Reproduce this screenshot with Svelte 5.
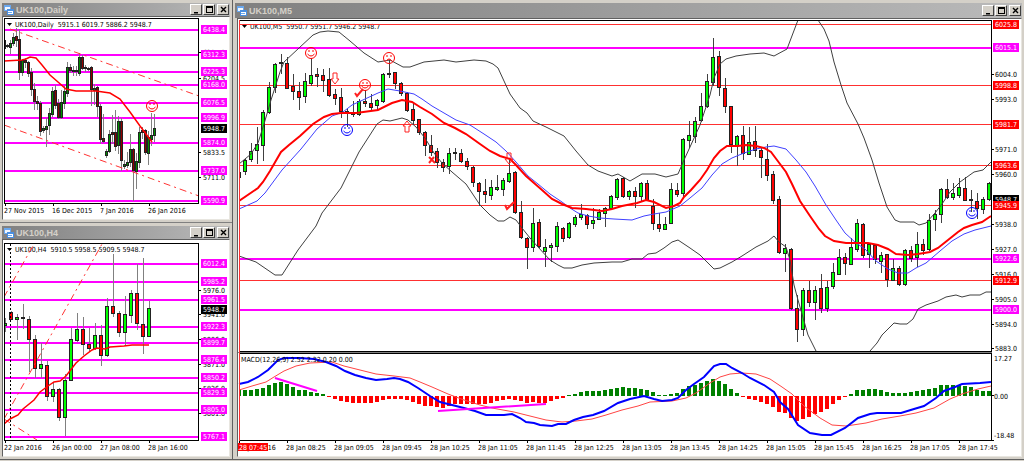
<script lang="ts">
  // each candle: direction, high, body top, body bottom, low
  function parse(list: string, x0: number, step: number) {
    return list.trim().split(/\s+/).map((item, i) => {
      const [high, top, bottom, low] = item.slice(1).split(',').map(Number);
      return { up: item[0] === 'g', x: x0 + i * step, high, top, bottom, low };
    });
  }

  const daily = {
    id: 'daily',
    title: 'UK100,Daily',
    box: '3 17 226 202',
    header: { x: 15, y: 27, text: 'UK100,Daily  5915.1 6019.7 5886.2 5948.7' },
    plot: { x: 4, y: 18, w: 195, h: 185 },
    half: 1,
    candles: parse(`
      r39,40,48,50 r44,45,46,47 g40,43,47,53 g33,37,43,45 r28,36,40,46 r29,39,72,79
      g59,60,72,75 r58,60,62,67 r61,62,73,76 r68,72,89,95 r83,89,101,109 r96,101,103,109
      r101,103,131,135 g126,128,130,132 g118,126,129,146 g108,113,125,134 g87,91,114,116
      r85,90,105,108 r99,103,117,118 g90,102,117,118 g86,91,103,108 g62,67,93,96
      r64,67,70,72 r66,70,71,75 r66,70,71,75 g53,57,73,75 r55,57,68,69 r65,67,68,71
      r67,68,69,70 r66,67,89,105 g84,88,90,104 r86,87,106,116 r104,106,139,143
      r114,138,141,142 g149,151,155,157 g130,134,151,152 r115,132,134,143 r110,132,146,150
      g116,121,145,153 r118,121,160,170 g160,164,166,168 g152,162,165,167 g134,149,162,166
      r148,149,170,200 g153,161,171,188 g127,132,162,167 r127,130,132,138 r129,130,152,154
      g131,137,153,164 g113,135,139,145 g114,128,135,141`, 4, 3),
    lines: [
      { kind: 'trend', pts: '10,29 199,96' },
      { kind: 'trend', pts: '4,125 199,196' },
      { kind: 'average', pts: '4,61 22,60 26,59 30,57 36,58 42,65 50,75 58,82 66,89 76,91 96,91 110,93 120,99 130,112 140,126 152,142' }
    ],
    axisX: 203,
    prices: [[52, '6327.0'], [78, '6204.5'], [152, '5833.5'], [177, '5711.0']],
    levels: [
      [29, '6438.4', 'm'], [54, '6312.3', 'm'], [71, '6225.3', 'm'], [84, '6168.0', 'm'],
      [102, '6076.5', 'm'], [117, '5996.9', 'm'], [142, '5874.0', 'm'], [170, '5737.0', 'm'], [200, '5590.9', 'm']
    ],
    current: [128, '5948.7'],
    timeY: 213,
    times: [[4, '27 Nov 2015'], [52, '16 Dec 2015'], [100, '7 Jan 2016'], [148, '26 Jan 2016']],
    faces: [[152, 106, 'red', 1]]
  };

  const h4 = {
    id: 'h4',
    title: 'UK100,H4',
    box: '3 240 226 216',
    header: { x: 15, y: 252, text: 'UK100,H4  5910.5 5958.5 5909.5 5948.7' },
    plot: { x: 4, y: 243, w: 195, h: 197 },
    half: 2,
    candles: parse(`
      g318,323,325,331 r311,312,319,319 g314,317,319,339 r304,317,318,328 r316,319,339,371
      r335,339,368,377 g343,364,368,377 r361,365,396,400 g382,389,396,401 r388,389,417,420
      g374,380,417,435 g328,339,380,380 g313,329,340,341 r317,329,344,354 r328,344,348,351
      g323,335,348,349 r325,335,355,365 g298,306,355,356 r254,306,313,316 r311,313,332,336
      g296,314,332,345 g290,293,315,322 r264,293,323,329 r258,324,336,353 g301,308,336,336`, 5, 6),
    lines: [
      { kind: 'trend', pts: '4,297 34,244' },
      { kind: 'trend', pts: '4,419 102,244' },
      { kind: 'trend', pts: '4,419 37,440' },
      { kind: 'divider', pts: '10.500,244 10.500,440' },
      { kind: 'average', pts: '4,424 10,419 18,415 23,409 34,400 40,392 48,386 54,382 60,381 66,376 76,363 84,356 92,350 97,348 105,349 110,347 124,346 132,345 149,345' }
    ],
    axisX: 203,
    prices: [[290, '5976.0'], [314, '5941.0'], [339, '5906.0'], [364, '5871.0'], [388, '5836.0'], [413, '5801.0']],
    levels: [
      [263, '6012.4', 'm'], [281, '5985.2', 'm'], [299, '5961.5', 'm'], [326, '5922.3', 'm'], [342, '5899.7', 'm'],
      [359, '5876.4', 'm'], [377, '5850.2', 'm'], [392, '5829.3', 'm'], [409, '5805.0', 'm'], [436, '5767.1', 'm']
    ],
    current: [309, '5948.7'],
    timeY: 450,
    times: [[4, '22 Jan 2016'], [52, '26 Jan 00:00'], [100, '27 Jan 08:00'], [148, '28 Jan 16:00']],
    faces: []
  };

  const m5 = {
    id: 'm5',
    title: 'UK100,M5',
    box: '238 19 783 437',
    header: { x: 250, y: 29, text: 'UK100,M5  5950.7 5951.7 5946.2 5948.7' },
    plot: { x: 239, y: 20, w: 753, h: 331 },
    half: 2,
    candles: parse(`
      g172,172,177,177 g159,160,171,174 g143,151,159,161 g127,144,150,163 g110,112,145,160
      g82,87,112,113 g63,64,87,92 r54,62,63,73 r57,63,88,88 r74,86,91,99 r82,91,97,109
      g73,81,96,102 g58,75,83,85 r68,74,76,86 r69,75,80,91 r68,79,95,96 r89,94,98,104
      r88,97,111,117 r109,111,112,126 r101,113,114,116 g99,101,114,115 r90,101,103,106
      r94,103,107,109 g99,100,105,110 g73,74,101,102 r60,73,74,77 r72,72,83,88 r82,83,93,95
      r92,93,110,111 r103,109,120,124 r119,119,132,134 r131,132,145,155 r135,145,152,155
      r148,151,162,167 r159,162,167,171 g148,153,166,173 r148,152,153,159 r149,153,161,162
      r158,161,166,169 r166,167,182,186 r182,183,191,205 r179,191,194,202 g180,187,195,199
      g175,187,189,190 g178,180,189,195 g160,173,181,182 r171,172,212,213 r201,212,237,238
      r237,238,247,268 g208,223,247,251 r219,222,246,247 g239,247,251,266 g243,245,247,261
      g222,226,246,251 r227,228,238,241 g222,223,237,238 g215,217,224,226 g204,214,217,219
      r214,215,224,228 g208,220,223,228 g209,212,219,219 g207,208,213,226 g195,196,208,209
      g178,179,197,199 r177,178,196,197 g190,191,196,199 r187,191,196,207 g182,183,196,201
      r180,183,200,200 r199,206,223,229 r213,224,228,231 g217,224,229,229 g183,189,223,223
      r183,190,194,196 g138,139,193,197 g121,135,140,147 g117,121,136,142 g93,106,120,121
      g74,81,106,107 g38,57,82,85 r51,56,87,95 r78,88,106,112 r106,106,144,152
      g135,136,145,165 r126,135,153,159 g127,142,154,154 r126,141,150,156 r147,150,157,177
      r144,159,175,180 r171,174,200,203 r196,199,252,253 g244,248,253,271 r248,249,308,309
      r295,308,329,341 g288,290,329,335 r281,290,302,306 g286,290,302,319 r274,288,308,312
      g281,287,308,311 g263,272,286,288 g249,257,274,274 r253,257,263,274 g238,247,264,264
      g219,223,249,251 r223,224,255,257 g243,244,254,267 r244,245,259,263 g252,255,261,272
      r254,254,279,286 g259,268,280,280 r266,268,284,285 g249,250,284,285 r246,250,258,261
      g232,244,257,266 r239,244,250,254 g214,220,249,250 g210,214,219,230 g188,189,214,222
      r179,189,197,198 g183,193,197,199 g178,187,195,197 r177,188,200,200 r190,199,200,211
      r193,201,208,218 g197,199,209,213 g182,183,199,200`, 239, 6),
    lines: [
      { kind: 'band', pts: '239,164 251,154 258,143 264,124 271,100 280,72 284,62 299,48 313,35 320,32 328,31 339,32 350,41 364,53 378,62 390,60 403,67 410,67 424,62 444,60 456,62 474,60 486,61 493,64 498,68 504,81 510,94 520,108 527,113 533,121 546,127 564,136 576,151 588,165 598,171 612,176 618,174 630,181 642,174 655,174 666,177 678,174 684,160 690,147 700,125 710,95 714,78 720,64 726,59 736,56 750,54 764,53 774,56 787,49 798,20' },
      { kind: 'band', pts: '818,20 824,29 829,41 834,62 841,85 847,103 858,124 864,138 872,160 879,183 887,207 895,220 900,222 914,222 919,225 926,223 935,213 942,204 950,192 960,182 974,172 983,170 991,162' },
      { kind: 'band', pts: '239,256 256,262 275,275 282,275 298,250 316,226 322,213 341,188 359,152 377,124 383,120 390,121 402,118 408,120 416,127 425,138 434,153 442,163 452,172 466,184 480,205 490,215 498,221 504,221 510,217 516,220 522,228 530,238 538,247 550,260 558,265 564,268 572,268 582,265 594,263 612,262 622,262 632,259 642,259 648,254 656,253 664,248 672,242 678,240 690,248 700,255 714,269 720,268 732,262 742,256 756,247 768,241 774,236 779,242 786,247 790,260 794,285 798,300 808,335 816,351' },
      { kind: 'band', pts: '870,351 877,343 882,335 894,323 900,324 907,324 913,319 918,309 926,305 938,301 946,297 956,295 962,297 970,295 980,295 986,292 991,292' },
      { kind: 'slow', pts: '239,209 257,201 265,193 282,170 301,149 317,129 332,116 343,112 352,105 365,99 378,93 388,89 400,91 414,94 422,99 432,106 444,113 456,120 470,125 484,134 496,142 506,151 516,162 528,176 538,184 550,194 562,202 570,208 578,213 588,216 600,218 614,219 632,220 644,216 654,214 666,212 680,206 690,198 702,188 712,175 722,164 732,158 744,153 756,149 766,147 774,146 786,149 796,160 806,172 815,186 826,205 836,220 845,233 856,243 865,249 876,261 888,269 898,273 908,273 916,268 926,263 940,251 952,241 964,234 975,230 991,226' },
      { kind: 'average', pts: '239,201 258,188 263,182 270,171 281,152 289,145 300,136 313,124 324,117 332,114 341,113 356,113 378,110 392,103 402,100 412,102 420,107 432,114 444,123 455,128 466,134 480,144 490,151 500,156 510,159 516,165 526,176 534,183 542,190 552,199 562,204 572,208 586,209 602,211 612,209 622,206 637,203 646,200 654,202 666,208 674,206 680,203 684,197 691,190 700,180 707,170 714,158 720,151 727,146 738,146 746,145 756,146 764,148 771,152 777,160 786,172 792,184 800,201 810,216 819,229 825,236 834,241 846,243 868,243 878,245 888,249 896,254 908,255 918,254 930,252 938,248 948,240 958,232 964,228 972,225 982,222 991,216' }
    ],
    axisX: 995,
    prices: [
      [74, '6004.0'], [99, '5993.0'], [149, '5971.0'], [174, '5960.0'], [224, '5938.0'],
      [249, '5927.0'], [274, '5916.0'], [299, '5905.0'], [324, '5894.0'], [348, '5883.0']
    ],
    levels: [
      [24, '6025.8', 'r'], [47, '6015.1', 'm'], [85, '5998.8', 'r'], [124, '5981.7', 'r'], [165, '5963.6', 'r'],
      [205, '5945.9', 'r'], [258, '5922.6', 'm'], [280, '5912.9', 'r'], [309, '5900.0', 'm']
    ],
    current: [199, '5948.7'],
    timeY: 450,
    times: [
      [238, '28 Jan 2016'], [286, '28 Jan 08:25'], [334, '28 Jan 09:05'], [382, '28 Jan 09:45'], [430, '28 Jan 10:25'],
      [478, '28 Jan 11:05'], [526, '28 Jan 11:45'], [574, '28 Jan 12:25'], [622, '28 Jan 13:05'], [670, '28 Jan 13:45'],
      [718, '28 Jan 14:25'], [766, '28 Jan 15:05'], [814, '28 Jan 15:45'], [862, '28 Jan 16:25'], [910, '28 Jan 17:05'],
      [958, '28 Jan 17:45']
    ],
    faces: [[311, 53, 'red', 1], [365, 85, 'red', 1], [389, 58, 'red', -1], [347, 130, 'blue', 1], [972, 213, 'blue', 1]]
  };

  const macdBars = [
    6, 6, 6, 7, 8, 11, 13, 14, 12, 9, 6, 6, 4, 3, 2, -1, -3, -5, -6, -7, -7, -7, -7, -6, -4, -3, -3, -3, -4, -6, -8,
    -10, -10, -11, -12, -10, -8, -8, -8, -8, -8, -8, -7, -5, -4, -3, -4, -5, -7, -6, -7, -7, -5, -3, -2, 1, 2, 4, 5,
    5, 5, 6, 7, 8, 9, 8, 8, 7, 6, 4, 1, 1, 2, 3, 7, 10, 11, 13, 15, 17, 15, 12, 7, 3, -1, -3, -4, -6, -8, -11, -16,
    -17, -22, -25, -23, -21, -18, -16, -13, -8, -4, -1, 2, 6, 6, 7, 7, 6, 4, 3, 3, 3, 4, 5, 6, 7, 8, 11, 11, 11, 11,
    10, 9, 6, 5, 5
  ];
  const macdLine = '239,384 248,382 258,377 268,370 278,360 284,358 300,358 314,359 326,362 336,366 345,371 355,375 366,378 376,380 387,379 394,378 400,379 408,382 418,388 430,396 440,402 452,405 464,408 475,411 486,415 504,415 512,414 520,418 526,422 534,423 540,425 552,426 558,424 566,424 574,420 583,417 593,415 604,411 618,403 630,399 644,396 654,399 662,401 672,400 678,398 686,390 694,384 704,377 714,366 720,364 726,364 732,368 742,373 750,378 764,385 774,392 780,402 788,409 798,425 810,433 822,435 831,435 845,428 858,418 870,414 877,413 901,413 914,409 924,406 936,398 944,391 955,387 962,384 980,383 991,382';
  const signalLine = '239,390 252,386 266,382 274,377 284,371 296,366 310,363 332,362 344,366 360,370 376,374 394,376 410,378 420,382 432,387 448,394 464,400 480,405 492,408 514,412 530,416 546,420 562,422 576,421 592,419 606,415 622,410 638,406 650,402 672,401 686,398 696,393 710,383 720,377 730,374 742,373 756,374 770,379 782,387 792,394 804,406 820,418 832,425 846,426 866,423 882,419 900,416 916,413 934,408 950,399 962,394 978,389 991,386';
</script>

{#snippet titlebar(title)}
  <header class="titlebar">
    <svg class="app-icon" viewBox="0 0 10 10" width="10" height="10" aria-hidden="true">
      <rect x="0" y="0" width="7" height="6" fill="#6aa8ee" />
      <rect x="1" y="2" width="5" height="3" fill="#f0f7ff" />
      <rect x="3" y="4" width="7" height="6" fill="#4b8fe0" />
      <path d="M4 6h5v3H4z" fill="#fff" />
      <path d="M4 8l1-1 1 1 1-1 1 1" fill="none" stroke="#6aa8ee" />
    </svg>
    <h2>{title}</h2>
    <div class="controls">
      <button type="button" aria-label="Minimize">
        <svg viewBox="0 0 9 8" width="9" height="8"><path d="M2 6h4v1.500H2z" /></svg>
      </button>
      <button type="button" aria-label="Maximize">
        <svg viewBox="0 0 9 8" width="9" height="8"><path d="M1 0h7v7H1zM2 2v4h5V2z" fill-rule="evenodd" /></svg>
      </button>
      <button type="button" class="close" aria-label="Close">
        <svg viewBox="0 0 9 8" width="9" height="8"><path d="M2 1l5 5M7 1l-5 5" stroke="#000" stroke-width="1.4" /></svg>
      </button>
    </div>
  </header>
{/snippet}

{#snippet base(c)}
  {@const right = c.plot.x + c.plot.w}
  <clipPath id="clip-{c.id}">
    <rect x={c.plot.x} y={c.plot.y} width={c.plot.w} height={c.plot.h} />
  </clipPath>
  <path d="M{c.header.x - 8} {c.header.y - 4}h5l-2.500 3z" />
  <text x={c.header.x} y={c.header.y}>{c.header.text}</text>

  <g clip-path="url(#clip-{c.id})">
    {#each c.levels as [y, , tone]}
      <rect class="level {tone}" x={c.plot.x} {y} width={c.plot.w} height={tone === 'm' ? 2 : 1} />
    {/each}
    {#each c.candles as k}
      <rect class="wick" x={k.x} y={k.high} width="1" height={k.low - k.high + 1} />
      <rect class="shell" x={k.x - c.half} y={k.top} width={c.half === 1 ? 3 : 4} height={k.bottom - k.top + 1} />
      {#if k.bottom - k.top > 1}
        <rect
          class={k.up ? 'up' : 'down'}
          x={k.x - c.half + 1}
          y={k.top + 1}
          width={c.half === 1 ? 1 : 2}
          height={k.bottom - k.top - 1}
        />
      {/if}
    {/each}
    {#each c.lines as l}
      <polyline class={l.kind} points={l.pts} />
    {/each}
  </g>

  {#each c.faces as [x, y, color, mood]}
    <g class="face" transform="translate({x} {y})" stroke={color}>
      <circle r="5.500" />
      <path d="M-2 -3v2M2 -3v2" />
      <path d={mood > 0 ? 'M-3.500 1Q0 5 3.500 1' : 'M-3 3Q0 -1 3 3'} />
    </g>
  {/each}

  <rect class="frame" x={c.plot.x + 0.5} y={c.plot.y + 0.5} width={c.plot.w - 1} height={c.plot.h} />

  {#each c.prices as [y, label]}
    <rect x={right} {y} width="2" height="1" />
    <text x={c.axisX} y={y + 3}>{label}</text>
  {/each}
  {@render badge(c.axisX, c.current[0], c.current[1], 'now')}
  {#each c.levels as [y, label, tone]}
    {@render badge(c.axisX, y, label, tone)}
  {/each}
  {#each c.times as [x, label]}
    <rect x={x + 1} y={c.timeY - 10} width="1" height="3" />
    <text {x} y={c.timeY}>{label}</text>
  {/each}
{/snippet}

{#snippet badge(x, y, label, tone)}
  <rect class="badge {tone}" x={x - 2} y={y - 4} width="26" height="9" />
  <text class="on-badge" {x} y={y + 3}>{label}</text>
{/snippet}

<main class="desktop">
  <div class="side">
    <section class="window daily">
      {@render titlebar(daily.title)}
      <div class="well">
        <svg class="chart" viewBox={daily.box} role="img" aria-label={daily.title}>{@render base(daily)}</svg>
      </div>
    </section>
    <section class="window h4">
      {@render titlebar(h4.title)}
      <div class="well">
        <svg class="chart" viewBox={h4.box} role="img" aria-label={h4.title}>{@render base(h4)}</svg>
      </div>
    </section>
  </div>

  <section class="window m5">
    {@render titlebar(m5.title)}
    <div class="well">
      <svg class="chart" viewBox={m5.box} role="img" aria-label={m5.title}>
        {@render base(m5)}

        <!-- trade marks -->
        <g class="mark">
          <path d="M333 73h4v6h2l-4 5l-4 -5h2z" />
          <path d="M405 132h4v-6h2l-4 -5l-4 5h2z" />
          <path d="M507 153h4v6h2l-4 5l-4 -5h2z" />
          <path class="bold" d="M355 93l2 3l6 -7M505 205l2 4l7 -7" />
          <path class="bold" d="M429 157l6 6M434 157l-5 6" />
        </g>

        <!-- MACD pane -->
        <rect class="gap" x="238" y="352" width="754" height="1" />
        <rect class="frame" x="239.500" y="353.500" width="752" height="87" />
        {#each macdBars as v, i}
          <rect
            class={v > 0 ? 'bar-up' : 'bar-down'}
            x={Math.max(240, 237 + i * 6)}
            y={v > 0 ? 396 - v : 396}
            width={i === 0 ? 1 : 4}
            height={Math.abs(v)}
          />
        {/each}
        <polyline class="signal" points={signalLine} />
        <polyline class="macd" points={macdLine} />
        <path class="divergence" d="M275 378L317 391M438 411L546 404" />
        <text x="241" y="362">MACD(12,26,9) 2.52 2.32 0.20 0.00</text>
        <text x="994" y="361">17.27</text>
        <text x="994" y="399">0.00</text>
        <text x="994" y="438">-18.48</text>
        <rect x="992" y="395" width="2" height="1" />
        <rect x="992" y="440" width="2" height="1" />

        <rect class="level r" x="239" y="20" width="1" height="421" />
        <rect class="badge r" x="238" y="443" width="30" height="8" />
        <text class="on-badge" x="237" y="450">.28 07:45</text>
      </svg>
    </div>
  </section>
</main>

<style>
  :global(body) {
    margin: 0;
    background: #d4d0c8;
  }

  .desktop {
    display: grid;
    grid-template-columns: minmax(0, 232fr) minmax(0, 792fr);
    align-items: start;
    font-family: "DejaVu Sans Condensed", "DejaVu Sans", sans-serif;
    border-bottom: 1px solid #606060;
  }

  .window {
    background: #d4d0c8;
    padding: 3px 2px 2px;
  }

  .daily {
    border-bottom: 1px solid #808080;
  }

  .m5 {
    border-left: 1px solid #606060;
  }

  .titlebar {
    display: flex;
    align-items: center;
    height: 13px;
    padding: 0 1px 0 2px;
    background: linear-gradient(to right, #808080, #bababa);
  }

  .m5 .titlebar {
    height: 15px;
  }

  .app-icon {
    flex: none;
  }

  h2 {
    flex: 1;
    margin: 0 0 0 2px;
    font-family: "Liberation Sans", Arial, sans-serif;
    font-size: 9px;
    line-height: 12px;
    color: #d4d0c8;
  }

  .controls {
    display: flex;
    gap: 1px;
  }

  button {
    display: flex;
    align-items: center;
    justify-content: center;
    width: 12px;
    height: 11px;
    padding: 0;
    background: #d4d0c8;
    border: 1px solid;
    border-color: #fff #404040 #404040 #fff;
  }

  button.close {
    margin-left: 1px;
  }

  .well {
    background: #fff;
    border: 1px solid;
    border-color: #606060 #e8e6e0 #e8e6e0 #606060;
  }

  .m5 .well {
    margin-left: 2px;
  }

  .chart {
    display: block;
    width: 100%;
    height: auto;
  }

  .chart text {
    font-size: 7px;
    fill: #000;
    white-space: pre;
  }

  .chart text.on-badge {
    fill: #fff;
  }

  rect {
    shape-rendering: crispEdges;
  }

  polyline {
    fill: none;
  }

  .frame {
    fill: none;
    stroke: #000;
  }

  .gap {
    fill: #808080;
  }

  .m {
    fill: #f0f;
  }

  .r {
    fill: #f00;
  }

  .now {
    fill: #000;
  }

  .level.r {
    fill: #ff3030;
  }

  .shell {
    fill: #222;
  }

  .wick {
    fill: #808080;
  }

  .m5 .wick {
    fill: #404040;
  }

  .up {
    fill: #0f0;
  }

  .down {
    fill: #f00;
  }

  .daily .up {
    fill: #009000;
  }

  .daily .down {
    fill: #900000;
  }

  .trend {
    stroke: #f33;
    stroke-dasharray: 7 4 2 4;
  }

  .divider {
    stroke: #000;
    stroke-dasharray: 2 2;
  }

  .average {
    stroke: #f00;
    stroke-width: 2;
  }

  .side .average {
    stroke-width: 1.5;
  }

  .band {
    stroke: #404040;
  }

  .slow {
    stroke: #4040ff;
  }

  .signal {
    stroke: #f44;
  }

  .macd {
    stroke: #00f;
    stroke-width: 2;
  }

  .divergence {
    stroke: #f0f;
    stroke-width: 2;
  }

  .bar-up {
    fill: #008000;
  }

  .bar-down {
    fill: #f00;
  }

  .face {
    fill: none;
  }

  .mark {
    fill: none;
    stroke: #f22;
  }

  .mark .bold {
    stroke-width: 2;
  }
</style>
